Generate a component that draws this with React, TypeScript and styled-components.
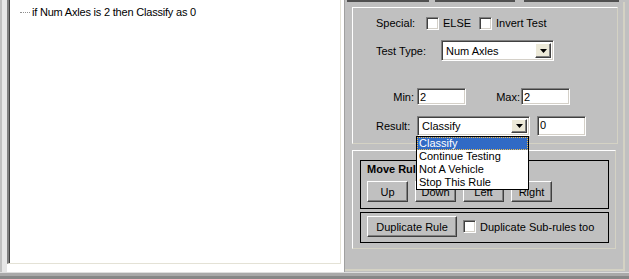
import React from 'react';
import styled, { createGlobalStyle } from 'styled-components';

const GlobalStyle = createGlobalStyle`
    html, body {
        margin: 0;
        padding: 0;
    }
    body {
        width: 629px;
        height: 279px;
        overflow: hidden;
        background: #c0c0c0;
        font-family: "Liberation Sans", Arial, sans-serif;
        font-size: 11px;
        color: #000;
    }
    * {
        box-sizing: border-box;
    }
`;

const Window = styled.div`
    width: 629px;
    height: 279px;
    display: flex;
    flex-direction: column;
`;

const Main = styled.div`
    display: flex;
    height: 272px;
`;

const BottomEdge = styled.div`
    height: 7px;
    border-top: 1px solid #dedede;
    background: linear-gradient(#a9a9a9 0 3px, #878787 3px);
`;

const LeftPane = styled.div`
    width: 345px;
    padding: 0 3px 8px 7px;
    background: linear-gradient(to right, #c0c0c0 0 2px, #e6e6e6 2px 7px, #fff 7px);
    border-right: 1px solid #a0a0a0;
`;

const Tree = styled.div`
    height: 100%;
    background: #fff;
    border-left: 2px solid #808080;
    border-right: 1px solid #e4e2d6;
    border-bottom: 1px solid #e4e2d6;
    box-shadow: inset 1px 0 #404040;
    padding: 6px 0 0 11px;
`;

const TreeItem = styled.div`
    display: flex;
    align-items: center;
    height: 13px;
    line-height: 13px;
    white-space: nowrap;
    letter-spacing: -0.2px;
`;

const Connector = styled.span`
    width: 10px;
    border-top: 1px dotted #909090;
    margin-right: 2px;
`;

const RightPane = styled.div`
    flex: 1;
    display: flex;
    flex-direction: column;
`;

const TabStubs = styled.div`
    display: flex;
    height: 2px;
    padding-left: 2px;
`;

const TabStub = styled.div<{ $w: number; $gap: number }>`
    width: ${p => p.$w}px;
    margin-right: ${p => p.$gap}px;
    background: #505050;
`;

const Frame = styled.div`
    flex: 1;
    margin: 0 4px 1px 0;
    padding: 5px 0 0 7px;
    border-right: 2px solid #d4d2c4;
    border-bottom: 2px solid #d4d2c4;
`;

const Panel = styled.div<{ $w: number; $h: number; $top?: number }>`
    width: ${p => p.$w}px;
    height: ${p => p.$h}px;
    margin-top: ${p => p.$top || 0}px;
    border-top: 1px solid #fff;
    border-left: 1px solid #fff;
    border-right: 1px solid #d4d2c4;
    border-bottom: 1px solid #d4d2c4;
`;

const FieldRow = styled.div<{ $top: number; $h: number }>`
    display: flex;
    align-items: center;
    margin-top: ${p => p.$top}px;
    height: ${p => p.$h}px;
    padding-left: 23px;
`;

const Label = styled.span<{ $w: number; $right?: boolean; $gap?: number }>`
    width: ${p => p.$w}px;
    margin-right: ${p => p.$gap || 0}px;
    text-align: ${p => (p.$right ? 'right' : 'left')};
    white-space: nowrap;
`;

const Sunken = styled.div`
    background: #fff;
    border-top: 1px solid #808080;
    border-left: 1px solid #808080;
    border-right: 1px solid #fff;
    border-bottom: 1px solid #fff;
    box-shadow: inset 1px 1px #404040, inset -1px -1px #d4d0c8;
`;

const Check = styled(Sunken)`
    width: 13px;
    height: 13px;
    flex: none;
    margin-right: 4px;
`;

const Input = styled(Sunken)<{ $w: number; $ml?: number }>`
    width: ${p => p.$w}px;
    height: 100%;
    margin-left: ${p => p.$ml || 0}px;
    padding: 2px 0 0 2px;
    line-height: 13px;
`;

const SelectBox = styled(Sunken)<{ $w: number }>`
    position: relative;
    width: ${p => p.$w}px;
    height: 100%;
    display: flex;
    align-items: center;
    padding: 2px;
`;

const SelectText = styled.span`
    flex: 1;
    padding-left: 2px;
`;

const ArrowButton = styled.div`
    width: 16px;
    height: 100%;
    background: #ece9d8;
    border-top: 1px solid #fff;
    border-left: 1px solid #fff;
    border-right: 1px solid #404040;
    border-bottom: 1px solid #404040;
    box-shadow: inset -1px -1px #808080;
    display: flex;
    align-items: center;
    justify-content: center;
`;

const DropList = styled.div`
    position: absolute;
    left: -2px;
    top: calc(100% + 1px);
    width: 113px;
    background: #fff;
    border: 1px solid #000;
    z-index: 10;
`;

const DropItem = styled.div<{ $active?: boolean }>`
    height: 13px;
    line-height: 12px;
    padding-left: 2px;
    white-space: nowrap;
    background: ${p => (p.$active ? '#316ac5' : '#fff')};
    color: ${p => (p.$active ? '#fff' : '#000')};
    outline: ${p => (p.$active ? '1px dotted #f0c050' : 'none')};
    outline-offset: -1px;
`;

const BlackGroup = styled.div<{ $h: number; $top: number }>`
    width: 249px;
    height: ${p => p.$h}px;
    margin: ${p => p.$top}px 0 0 7px;
    border: 1px solid #000;
`;

const GroupTitle = styled.div`
    font-weight: bold;
    line-height: 13px;
    margin: 2px 0 0 6px;
    white-space: nowrap;
`;

const ButtonRow = styled.div<{ $top: number; $gap: number }>`
    display: flex;
    align-items: center;
    gap: ${p => p.$gap}px;
    margin-top: ${p => p.$top}px;
    padding-left: 6px;
`;

const Button = styled.div<{ $w: number }>`
    width: ${p => p.$w}px;
    height: 21px;
    background: #c0c0c0;
    border-top: 1px solid #fff;
    border-left: 1px solid #fff;
    border-right: 1px solid #404040;
    border-bottom: 1px solid #404040;
    box-shadow: inset -1px -1px #808080;
    display: flex;
    align-items: center;
    justify-content: center;
`;

const CheckField = styled.div`
    display: flex;
    align-items: center;
`;

const CheckText = styled.span<{ $w?: number }>`
    width: ${p => (p.$w ? `${p.$w}px` : 'auto')};
    white-space: nowrap;
`;

const DownArrow = () => (
    <svg width="7" height="4" viewBox="0 0 7 4">
        <path d="M0 0h7L3.5 4z" fill="#000" />
    </svg>
);

const Select = ({ w, value, open }: { w: number; value: string; open?: boolean }) => (
    <SelectBox $w={w}>
        <SelectText>{value}</SelectText>
        <ArrowButton>
            <DownArrow />
        </ArrowButton>
        {open && (
            <DropList>
                <DropItem $active>Classify</DropItem>
                <DropItem>Continue Testing</DropItem>
                <DropItem>Not A Vehicle</DropItem>
                <DropItem>Stop This Rule</DropItem>
            </DropList>
        )}
    </SelectBox>
);

const App = () => {
    return (
        <Window>
            <GlobalStyle />
            <Main>
                <LeftPane>
                    <Tree>
                        <TreeItem>
                            <Connector />
                            if Num Axles is 2 then Classify as 0
                        </TreeItem>
                    </Tree>
                </LeftPane>
                <RightPane>
                    <TabStubs>
                        <TabStub $w={82} $gap={6} />
                        <TabStub $w={80} $gap={9} />
                        <TabStub $w={95} $gap={0} />
                    </TabStubs>
                    <Frame>
                        <Panel $w={266} $h={137}>
                            <FieldRow $top={8} $h={14}>
                                <Label $w={50}>Special:</Label>
                                <Check />
                                <CheckText $w={36}>ELSE</CheckText>
                                <Check />
                                <CheckText>Invert Test</CheckText>
                            </FieldRow>
                            <FieldRow $top={10} $h={21}>
                                <Label $w={65}>Test Type:</Label>
                                <Select w={113} value="Num Axles" />
                            </FieldRow>
                            <FieldRow $top={27} $h={17}>
                                <Label $w={38} $right $gap={3}>Min:</Label>
                                <Input $w={49}>2</Input>
                                <Label $w={54} $right $gap={1}>Max:</Label>
                                <Input $w={49}>2</Input>
                            </FieldRow>
                            <FieldRow $top={11} $h={20}>
                                <Label $w={41}>Result:</Label>
                                <Select w={113} value="Classify" open />
                                <Input $w={49} $ml={7}>0</Input>
                            </FieldRow>
                        </Panel>
                        <Panel $w={264} $h={99} $top={6}>
                            <BlackGroup $h={49} $top={9}>
                                <GroupTitle>Move Rule</GroupTitle>
                                <ButtonRow $top={5} $gap={7}>
                                    <Button $w={41}>Up</Button>
                                    <Button $w={41}>Down</Button>
                                    <Button $w={41}>Left</Button>
                                    <Button $w={41}>Right</Button>
                                </ButtonRow>
                            </BlackGroup>
                            <BlackGroup $h={31} $top={3}>
                                <ButtonRow $top={3} $gap={6}>
                                    <Button $w={90}>Duplicate Rule</Button>
                                    <CheckField>
                                        <Check />
                                        <CheckText>Duplicate Sub-rules too</CheckText>
                                    </CheckField>
                                </ButtonRow>
                            </BlackGroup>
                        </Panel>
                    </Frame>
                </RightPane>
            </Main>
            <BottomEdge />
        </Window>
    );
};

export default App;
